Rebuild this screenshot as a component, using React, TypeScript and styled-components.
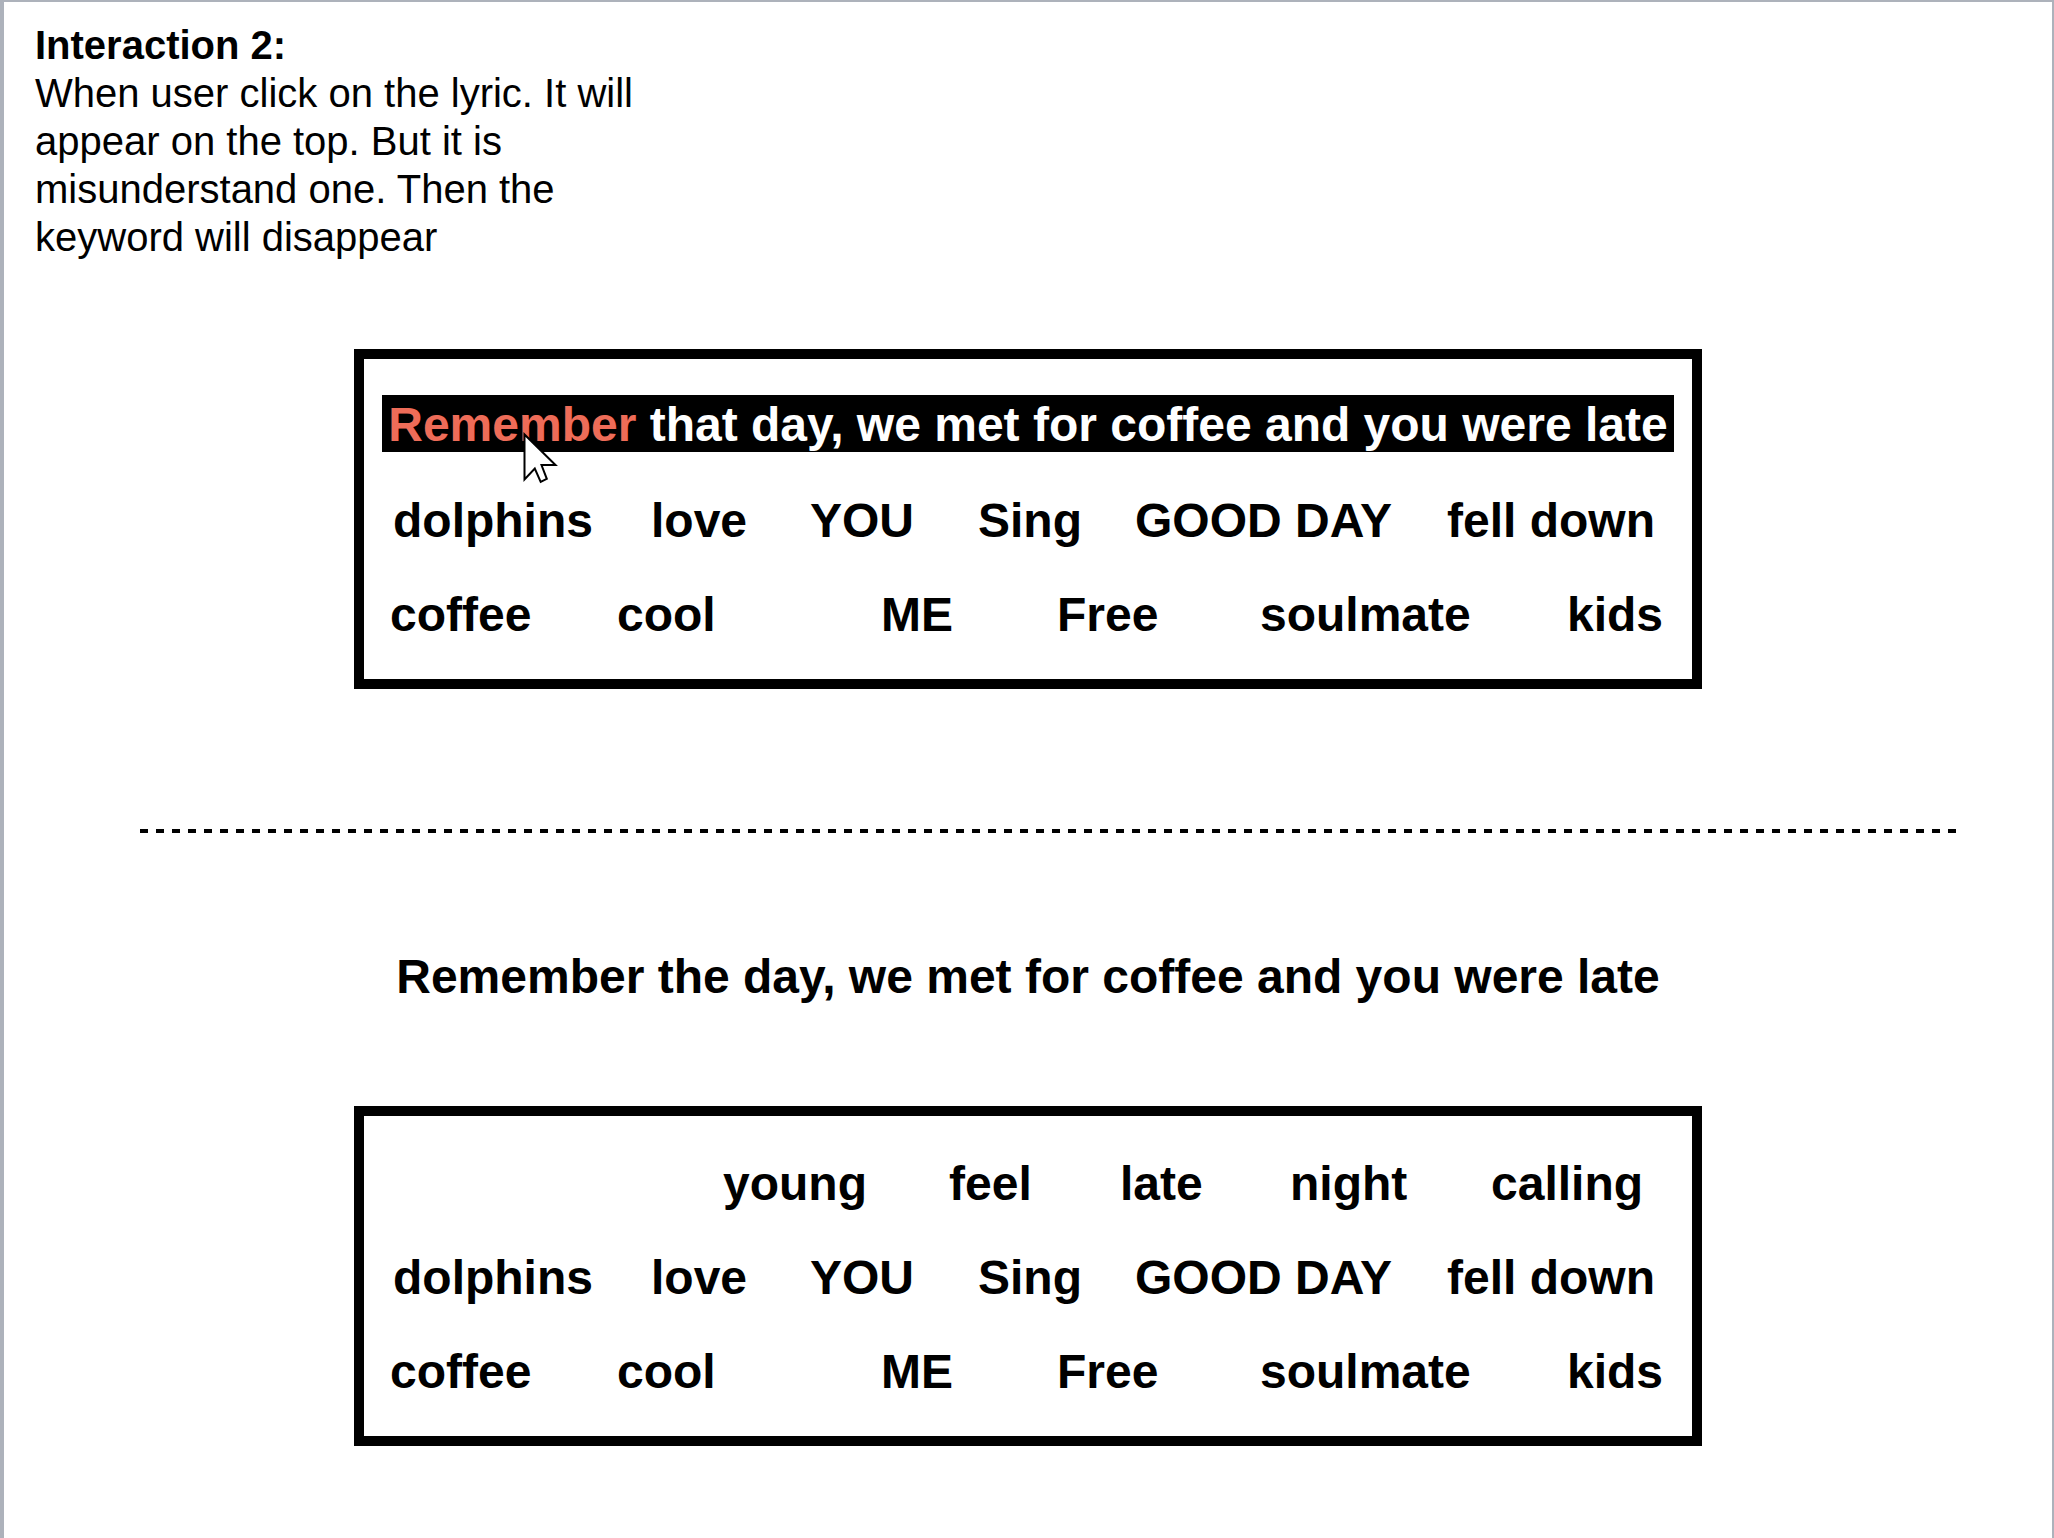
import React from "react";
import styled, { createGlobalStyle } from "styled-components";

const GlobalStyle = createGlobalStyle`
  * { box-sizing: border-box; }
  body {
    margin: 0;
    background: #adb2bb;
    color: #000;
    font-family: "Liberation Sans", Helvetica, Arial, sans-serif;
  }
`;

const Slide = styled.main`
  min-height: 100vh;
  border: solid #adb2bb;
  border-width: 2px 2px 0 4px;
  background: #fff;
`;

const Note = styled.header`
  max-width: 680px;
  padding: 19px 0 0 31px;
  font-size: 40px;
  line-height: 48px;
`;

const NoteTitle = styled.h1`
  margin: 0;
  font: inherit;
  font-weight: 700;
`;

const NoteText = styled.p`
  margin: 0;
`;

const Board = styled.section<{ $top: number }>`
  display: grid;
  grid-template-columns: minmax(0, 1fr);
  grid-auto-rows: 58px;
  row-gap: 36px;
  max-width: 1348px;
  margin: ${(p) => p.$top}px auto 0;
  padding: 39px 14px 35px;
  border: 10px solid #000;
`;

const Row = styled.div<{ $columns: string }>`
  display: grid;
  grid-template-columns: ${(p) => p.$columns};
  align-items: center;
`;

const Word = styled.button`
  padding: 0;
  border: 0;
  background: none;
  color: inherit;
  font: 700 48px/58px "Liberation Sans", Helvetica, Arial, sans-serif;
  text-align: left;
  white-space: nowrap;
  cursor: pointer;
`;

const Highlight = styled.div`
  position: relative;
  place-self: start center;
  margin-top: -3px;
  padding: 2px 6px 0;
  background: #000;
  color: #fff;
  font-size: 48px;
  font-weight: 700;
  line-height: 55px;
  white-space: nowrap;
`;

const Keyword = styled.span`
  color: #ee6c58;
`;

const Pointer = styled.svg`
  position: absolute;
  top: 36px;
  left: 139px;
  width: 40px;
  height: 56px;
`;

const Divider = styled.hr`
  height: 4px;
  margin: 140px 96px 0 136px;
  border: 0;
  background: repeating-linear-gradient(to right, #000 0 8px, transparent 8px 16px);
`;

const Lyric = styled.h2`
  margin: 115px 0 0;
  font-size: 48px;
  font-weight: 700;
  line-height: 58px;
  text-align: center;
`;

/* indent and columns are relative shares of the board width */
type WordRow = { indent: number; columns: number[]; words: string[] };

const topRow: WordRow = {
  indent: 345,
  columns: [226, 171, 170, 201, 187],
  words: ["young", "feel", "late", "night", "calling"],
};

const sharedRows: WordRow[] = [
  {
    indent: 15,
    columns: [258, 159, 168, 157, 312, 231],
    words: ["dolphins", "love", "YOU", "Sing", "GOOD DAY", "fell down"],
  },
  {
    indent: 12,
    columns: [227, 264, 176, 203, 307, 111],
    words: ["coffee", "cool", "ME", "Free", "soulmate", "kids"],
  },
];

const WordLine = ({ indent, columns, words }: WordRow) => (
  <Row $columns={[indent, ...columns].map((c) => `minmax(0, ${c}fr)`).join(" ")}>
    <span />
    {words.map((word) => (
      <Word key={word} type="button">
        {word}
      </Word>
    ))}
  </Row>
);

export default function App() {
  return (
    <>
      <GlobalStyle />
      <Slide>
        <Note>
          <NoteTitle>Interaction 2:</NoteTitle>
          <NoteText>
            When user click on the lyric. It will appear on the top. But it is
            misunderstand one. Then the keyword will disappear
          </NoteText>
        </Note>

        <Board $top={88}>
          <Highlight>
            <Keyword>Remember</Keyword> that day, we met for coffee and you were late
            <Pointer viewBox="0 0 40 56" aria-hidden="true">
              <path
                d="M3.500 3.500 V48.500 L13.800 37.500 L19.700 50.800 L25.800 47.800 L20.500 34 H34.500 Z"
                fill="#fff"
                stroke="#000"
                strokeWidth="2"
              />
            </Pointer>
          </Highlight>
          {sharedRows.map((row) => (
            <WordLine key={row.words[0]} {...row} />
          ))}
        </Board>

        <Divider />

        <Lyric>Remember the day, we met for coffee and you were late</Lyric>

        <Board $top={100}>
          <WordLine {...topRow} />
          {sharedRows.map((row) => (
            <WordLine key={row.words[0]} {...row} />
          ))}
        </Board>
      </Slide>
    </>
  );
}
